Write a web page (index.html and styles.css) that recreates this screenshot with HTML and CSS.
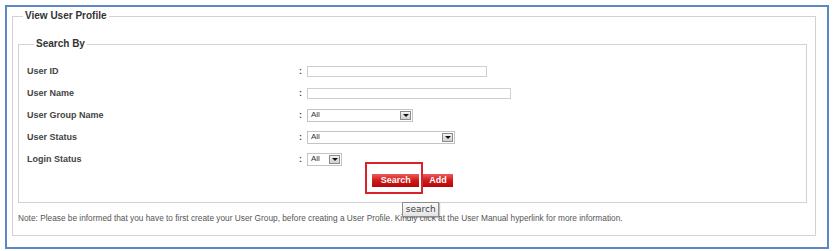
FILE: index.html
```html
<!DOCTYPE html>
<html lang="en">
<head>
  <meta charset="UTF-8">
  <title>View User Profile</title>
  <link rel="stylesheet" href="styles.css">
</head>
<body>
  <div class="frame">
    <fieldset class="outer">
      <legend>View User Profile</legend>

      <fieldset class="inner">
        <legend>Search By</legend>
        <table class="form">
          <tr>
            <td class="label">User ID</td>
            <td class="colon">:</td>
            <td><input type="text" class="text w1"></td>
          </tr>
          <tr>
            <td class="label">User Name</td>
            <td class="colon">:</td>
            <td><input type="text" class="text w2"></td>
          </tr>
          <tr>
            <td class="label">User Group Name</td>
            <td class="colon">:</td>
            <td><div class="select s1"><span>All</span><span class="arrow"></span></div></td>
          </tr>
          <tr>
            <td class="label">User Status</td>
            <td class="colon">:</td>
            <td><div class="select s2"><span>All</span><span class="arrow"></span></div></td>
          </tr>
          <tr>
            <td class="label">Login Status</td>
            <td class="colon">:</td>
            <td><div class="select s3"><span>All</span><span class="arrow"></span></div></td>
          </tr>
        </table>

        <div class="button-area">
          <span class="btn-wrap">
            <button class="btn">Search</button>
            <span class="mark"></span>
            <span class="tip">search</span>
          </span>
          <button class="btn">Add</button>
        </div>
      </fieldset>

      <p class="note">Note: Please be informed that you have to first create your User Group, before creating a User Profile. Kindly click at the User Manual hyperlink for more information.</p>
    </fieldset>
  </div>
</body>
</html>
```

FILE: styles.css
```css
body {
  margin: 0;
  background: #fff;
  font-family: "Liberation Sans", Arial, sans-serif;
  color: #444;
}
.frame {
  box-sizing: border-box;
  width: 824px;
  height: 244px;
  margin: 5px;
  border: 2px solid #5b87c2;
  padding: 3px 11px 11px 5px;
}
fieldset {
  margin: 0;
  border: 1px solid #d2d2d2;
  min-width: 0;
}
legend {
  font-size: 10px;
  line-height: 12px;
  font-weight: bold;
  color: #333;
  padding: 0 2px;
}
.outer {
  padding: 16px 8px 12px 5px;
}
.outer > legend {
  margin-left: 5px;
}
.inner {
  padding: 10px 8px 15px 8px;
}
.inner > legend {
  margin-left: 7px;
}
.form {
  border-collapse: collapse;
}
.form tr {
  height: 22px;
}
.form td {
  padding: 0;
  line-height: 12px;
  vertical-align: middle;
}
.label {
  width: 272px;
  font-size: 9px;
  font-weight: bold;
  color: #444;
}
.colon {
  width: 8px;
  font-size: 9px;
  font-weight: bold;
}
.text {
  display: block;
  box-sizing: border-box;
  height: 11px;
  margin: 0;
  padding: 0;
  border: 1px solid #cfcfcf;
  background: #fff;
}
.w1 { width: 180px; }
.w2 { width: 204px; }
.select {
  box-sizing: border-box;
  display: flex;
  align-items: center;
  justify-content: space-between;
  height: 13px;
  border: 1px solid #c4c4c4;
  padding: 0 1px 0 3px;
  font-size: 8px;
  color: #333;
  background: #fff;
}
.s1 { width: 106px; }
.s2 { width: 148px; }
.s3 { width: 35px; }
.arrow {
  position: relative;
  box-sizing: border-box;
  width: 11px;
  height: 9px;
  border: 1px solid #8c8c8c;
  background: linear-gradient(#f4f4f4, #cfcfcf);
}
.arrow::after {
  content: "";
  position: absolute;
  left: 2px;
  top: 2px;
  border-left: 3px solid transparent;
  border-right: 3px solid transparent;
  border-top: 3px solid #111;
}
.button-area {
  margin-top: 4px;
  text-align: center;
  font-size: 0;
}
.btn-wrap {
  position: relative;
  display: inline-block;
  vertical-align: top;
  margin-right: 4px;
}
.btn {
  display: inline-block;
  vertical-align: top;
  height: 13px;
  margin: 0;
  padding: 0 6px;
  border: 0;
  font-family: "Liberation Sans", Arial, sans-serif;
  font-size: 9px;
  font-weight: bold;
  line-height: 13px;
  color: #fff;
  background: linear-gradient(#ee5a5a, #d01a1a 50%, #b30808);
  cursor: pointer;
}
.btn-wrap .btn {
  width: 47px;
}
.mark {
  position: absolute;
  left: -7px;
  right: -4px;
  top: -12px;
  bottom: -7px;
  border: 2px solid #d8232a;
}
.tip {
  position: absolute;
  left: 30px;
  top: 28px;
  box-sizing: border-box;
  width: 37px;
  height: 15px;
  border: 1px solid #8e8e8e;
  background: linear-gradient(#fafafa, #e4e4e4);
  box-shadow: 1px 1px 1px rgba(0,0,0,0.25);
  font-family: "DejaVu Sans", sans-serif;
  font-size: 9px;
  line-height: 13px;
  text-align: center;
  color: #444;
}
.note {
  margin: 10px 0 0;
  font-size: 8.3px;
  line-height: 10px;
  color: #555;
  white-space: nowrap;
}
```
